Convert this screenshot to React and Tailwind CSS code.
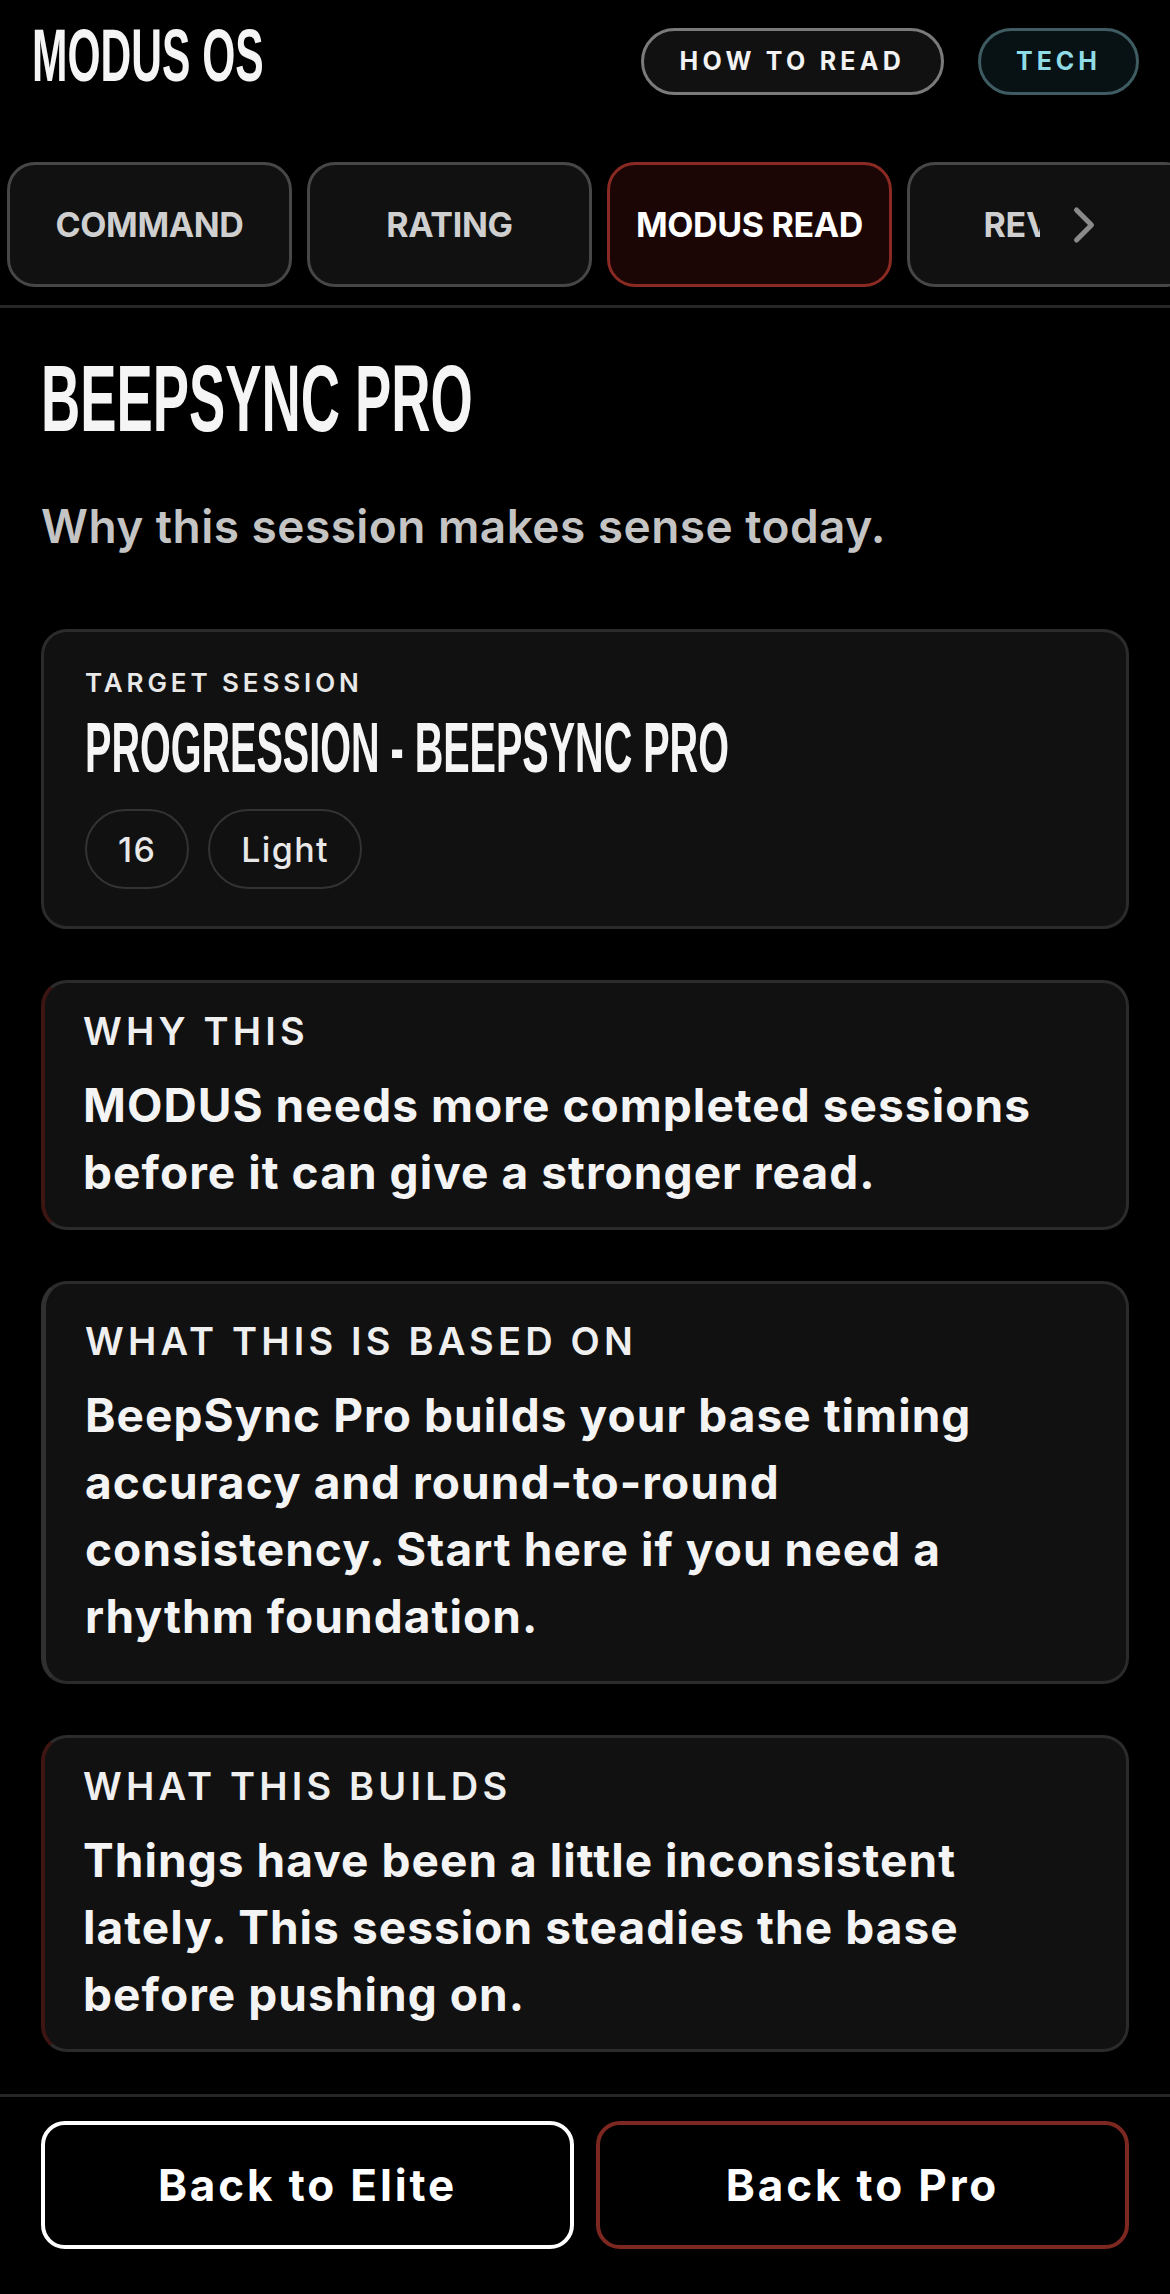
import React from "react"
import { ChevronRight } from "lucide-react"

const tabs = [
  { label: "COMMAND" },
  { label: "RATING" },
  { label: "MODUS READ", active: true },
  { label: "REVIEW" },
]

const sections = [
  {
    label: "WHY THIS",
    accent: true,
    lines: ["MODUS needs more completed sessions", "before it can give a stronger read."],
  },
  {
    label: "WHAT THIS IS BASED ON",
    accent: false,
    lines: [
      "BeepSync Pro builds your base timing",
      "accuracy and round-to-round",
      "consistency. Start here if you need a",
      "rhythm foundation.",
    ],
  },
  {
    label: "WHAT THIS BUILDS",
    accent: true,
    lines: [
      "Things have been a little inconsistent",
      "lately. This session steadies the base",
      "before pushing on.",
    ],
  },
]

const sans = "font-['Inter','Noto_Sans',sans-serif]"
const narrow = "font-['Liberation_Sans','Arial',sans-serif]"

export default function App() {
  return (
    <div className={`min-h-screen bg-black text-white flex flex-col ${sans}`}>
      {/* header */}
      <header className="flex items-start justify-between pl-[32px] pr-[31px]">
        <h1 className={`${narrow} mt-[19px] text-[74px] font-bold leading-none whitespace-nowrap origin-left scale-x-[0.575] text-[#f5f5f5]`}>
          MODUS OS
        </h1>
        <div className="mt-[28px] flex gap-[34px]">
          <button className="h-[67px] rounded-full border-[3px] border-[#7a7a7a] bg-[#111] px-[36px] text-[25px] font-bold tracking-[0.17em] text-[#f2f2f2]">
            HOW TO READ
          </button>
          <button className="h-[67px] rounded-full border-[3px] border-[#3e5c61] bg-[#081113] px-[35px] text-[25px] font-bold tracking-[0.16em] text-[#8fdbe6]">
            TECH
          </button>
        </div>
      </header>

      {/* tabs */}
      <nav className="relative mt-[67px] flex gap-[15px] overflow-hidden pl-[7px]">
        {tabs.map((t) => (
          <div
            key={t.label}
            className={`flex h-[125px] w-[285px] shrink-0 items-center justify-center rounded-[28px] border-[3px] text-[34px] font-bold tracking-[-0.01em] ${
              t.active ? "border-[#8a2a23] bg-[#1c0505] text-white" : "border-[#474747] bg-[#111] text-[#cfcfcf]"
            }`}
          >
            {t.label}
          </div>
        ))}
        <div className="absolute right-0 top-[3px] bottom-[3px] left-[1040px] flex items-center bg-[#111] pl-[14px]">
          <ChevronRight size={60} strokeWidth={2} className="text-[#8a8a8a]" />
        </div>
      </nav>
      <div className="mt-[18px] h-[3px] bg-[#262626]" />

      {/* content */}
      <main className="flex-1 px-[41px] pb-[40px]">
        <h2 className={`${narrow} mt-[44px] text-[94px] font-bold leading-none whitespace-nowrap origin-left scale-x-[0.578] text-[#f5f5f5]`}>
          BEEPSYNC PRO
        </h2>
        <p className="mt-[53px] text-[46px] font-semibold leading-[54px] tracking-[0.01em] text-[#c4c4c4]">
          Why this session makes sense today.
        </p>

        <div className="mt-[76px] rounded-[26px] border-[3px] border-[#2b2b2b] bg-[#111] pl-[41px] pt-[36px] pb-[37px]">
          <div className="text-[26px] font-semibold leading-[30px] tracking-[0.15em] text-[#e8e8e8]">TARGET SESSION</div>
          <div className={`${narrow} mt-[15px] text-[70px] font-bold leading-none whitespace-nowrap origin-left scale-x-[0.565] text-[#f5f5f5]`}>
            PROGRESSION - BEEPSYNC PRO
          </div>
          <div className="mt-[26px] flex gap-[19px]">
            {["16", "Light"].map((c) => (
              <span
                key={c}
                className="flex h-[80px] items-center rounded-full border-2 border-[#333] px-[31px] text-[34px] font-medium tracking-[0.04em] text-[#e8e8e8]"
              >
                {c}
              </span>
            ))}
          </div>
        </div>

        <div className="mt-[51px] flex flex-col gap-[51px]">
          {sections.map((s) => (
            <section
              key={s.label}
              className={`rounded-[26px] border-[3px] bg-[#111] ${
                s.accent
                  ? "border-[#2b2b2b] border-l-[4px] border-l-[#3d1512] pl-[38px] pt-[28px] pb-[21px]"
                  : "border-[#2b2b2b] border-l-[5px] border-l-[#303030] pl-[39px] pt-[37px] pb-[31px]"
              }`}
            >
              <div className="text-[38px] font-semibold leading-[40px] tracking-[0.11em] text-[#efefef]">{s.label}</div>
              <p className="mt-[21px] text-[46px] font-bold leading-[67px] tracking-[0.023em] text-[#f4f4f4]">
                {s.lines.map((l) => (
                  <span key={l} className="block whitespace-nowrap">
                    {l}
                  </span>
                ))}
              </p>
            </section>
          ))}
        </div>
      </main>

      {/* footer */}
      <footer className="border-t-[3px] border-[#262626] px-[41px] pt-[24px] pb-[45px]">
        <div className="grid grid-cols-2 gap-[22px]">
          <button className="h-[128px] rounded-[24px] border-4 border-white bg-black text-[44px] font-bold tracking-[0.065em] text-white">
            Back to Elite
          </button>
          <button className="h-[128px] rounded-[24px] border-4 border-[#7d2721] bg-black text-[44px] font-bold tracking-[0.065em] text-white">
            Back to Pro
          </button>
        </div>
      </footer>
    </div>
  )
}
